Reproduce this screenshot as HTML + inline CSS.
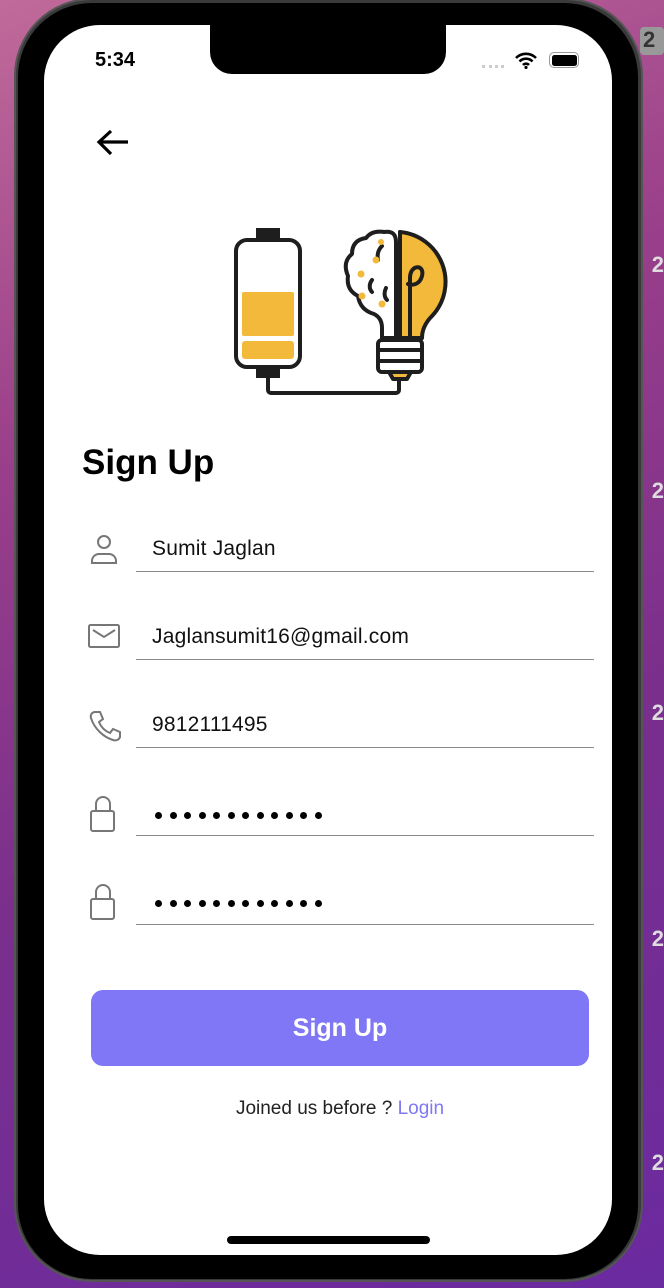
<!DOCTYPE html>
<html><head><meta charset="utf-8"><style>
*{margin:0;padding:0;box-sizing:border-box}
body{width:664px;height:1288px;overflow:hidden;position:relative;font-family:"Liberation Sans",sans-serif;
background:linear-gradient(160deg,#c06a9a 0%,#9a3f8a 30%,#7a2f8c 60%,#6a2aa0 100%)}
.phone{position:absolute;left:14px;top:-2px;width:629px;height:1284px;border-radius:78px;background:#3a3a3c;border:2px solid #555}
.screen{position:absolute;left:44px;top:25px;width:568px;height:1230px;border-radius:56px;background:#fff;overflow:hidden}
.notch{position:absolute;left:166px;top:0;width:236px;height:49px;background:#000;border-radius:0 0 22px 22px}
.t{position:absolute;color:#000}
.line{position:absolute;left:92px;width:458px;height:1px;background:#8a8a8a}
.fld{position:absolute;left:108px;font-size:21px;color:#111;letter-spacing:.2px}
.dots{position:absolute;left:111px;display:flex;gap:7.5px}
.dots i{display:block;width:7px;height:7px;border-radius:50%;background:#000}
.ic{position:absolute;left:44px}
.side{position:absolute;right:0;color:#ddd;font-weight:bold;font-size:22px}
</style></head><body>
<div class="side" style="top:27px;right:0;background:#999;color:#333;width:24px;height:28px;border-radius:4px;padding-left:3px">2</div>
<div class="side" style="top:252px;right:0">2</div>
<div class="side" style="top:478px;right:0">2</div>
<div class="side" style="top:700px;right:0">2</div>
<div class="side" style="top:926px;right:0">2</div>
<div class="side" style="top:1150px;right:0">2</div>
<div class="phone"></div>
<div style="position:absolute;left:18px;top:3px;width:620px;height:1276px;border-radius:74px;background:#000"></div>
<div class="screen">
<div class="notch"></div>
<div class="t" style="left:51px;top:24px;font-size:20px;font-weight:bold">5:34</div>
<div style="position:absolute;left:438px;top:40px;width:22px;height:3px;border-top:3px dotted #ccc"></div>
<svg style="position:absolute;left:471px;top:27px" width="22" height="17" viewBox="0 0 22 17"><path d="M1 6a14 14 0 0 1 20 0M4.5 9.5a9 9 0 0 1 13 0M8 13a4 4 0 0 1 6 0" stroke="#000" stroke-width="2.6" fill="none"/><circle cx="11" cy="15.5" r="1.6"/></svg>
<div style="position:absolute;left:505px;top:27px;width:30px;height:16px;border:1.5px solid #999;border-radius:5px;padding:1.5px"><div style="width:100%;height:100%;background:#000;border-radius:2.5px"></div></div>
<svg style="position:absolute;left:51px;top:103px" width="36" height="30" viewBox="0 0 36 30"><path d="M33 14H5M16 3L4 14l12 12" stroke="#000" stroke-width="3.2" fill="none"/></svg>
<svg style="position:absolute;left:142px;top:175px" width="280" height="210" viewBox="0 0 280 210">
<g stroke="#1e1e1e" stroke-width="4" fill="none" stroke-linecap="round" stroke-linejoin="round">
<rect x="70" y="28" width="24" height="12" fill="#1e1e1e" stroke="none"/>
<rect x="50" y="40" width="64" height="127" rx="11" fill="#fff"/>
<rect x="70" y="166" width="24" height="12" fill="#1e1e1e" stroke="none"/>
<path d="M82 178v12a3 3 0 0 0 3 3h125a3 3 0 0 0 3-3v-12"/>
<path d="M214 32A50 50 0 0 1 246 116Q236 126 236 138L214 138Z" fill="#f2b93b"/>
<path d="M210 138H196V128Q196 118 188 114Q174 110 172 96Q160 90 162 76Q156 62 166 54Q166 40 180 38Q186 30 198 32Q210 30 210 42Z" fill="#fff"/>
<path d="M214 32V140"/>
<path d="M203 172h22l-4 7h-14z" fill="#f2b93b"/>
<rect x="192" y="140" width="44" height="32" rx="4" fill="#fff"/>
<path d="M192 150h44M192 161h44"/>
<path d="M224 138V78c0-14 15-14 12-2-2 8-9 10-14 8"/>
<path d="M196 46c-4 4-5 9-4 14M186 80c-3 4-3 9 0 12M200 88c-2 4-2 9 1 12"/>
</g>
<rect x="56" y="92" width="52" height="44" fill="#f2b93b" rx="2"/>
<rect x="56" y="141" width="52" height="18" fill="#f2b93b" rx="3"/>
<g fill="#f2b93b"><circle cx="195" cy="42" r="3"/><circle cx="190" cy="60" r="3.5"/><circle cx="175" cy="74" r="3.5"/><circle cx="176" cy="96" r="3.5"/><circle cx="196" cy="104" r="3.5"/></g>
</svg>
<div class="t" style="left:38px;top:418px;font-size:35px;font-weight:bold">Sign Up</div>

<svg class="ic" style="top:508px" width="32" height="32" viewBox="0 0 32 32"><g stroke="#777" stroke-width="2" fill="none"><circle cx="16" cy="9" r="6"/><path d="M4 30v-2a7 7 0 0 1 7-7h10a7 7 0 0 1 7 7v2z"/></g></svg>
<div class="fld" style="top:512px">Sumit Jaglan</div><div class="line" style="top:546px"></div>

<svg class="ic" style="top:598px" width="32" height="26" viewBox="0 0 32 26"><g stroke="#777" stroke-width="2" fill="none"><rect x="1" y="2" width="30" height="22" rx="1.5"/><path d="M5 7l11 7 11-7"/></g></svg>
<div class="fld" style="top:600px">Jaglansumit16@gmail.com</div><div class="line" style="top:634px"></div>

<svg class="ic" style="top:685px" width="34" height="32" viewBox="0 0 34 32"><path d="M7 2l5 0 3 7-4 3c2 5 6 9 11 11l3-4 7 3 0 5c-1 3-4 4-7 3C15 27 6 18 3 8 2 5 4 2 7 2z" stroke="#777" stroke-width="2" fill="none"/></svg>
<div class="fld" style="top:688px">9812111495</div><div class="line" style="top:722px"></div>

<svg class="ic" style="top:770px" width="30" height="38" viewBox="0 0 30 38"><g stroke="#777" stroke-width="2" fill="none"><path d="M8 16V9a7 7 0 0 1 14 0v7"/><rect x="3" y="16" width="23" height="20" rx="2"/></g></svg>
<div class="dots" style="top:787px"><i></i><i></i><i></i><i></i><i></i><i></i><i></i><i></i><i></i><i></i><i></i><i></i></div><div class="line" style="top:810px"></div>

<svg class="ic" style="top:858px" width="30" height="38" viewBox="0 0 30 38"><g stroke="#777" stroke-width="2" fill="none"><path d="M8 16V9a7 7 0 0 1 14 0v7"/><rect x="3" y="16" width="23" height="20" rx="2"/></g></svg>
<div class="dots" style="top:875px"><i></i><i></i><i></i><i></i><i></i><i></i><i></i><i></i><i></i><i></i><i></i><i></i></div><div class="line" style="top:899px"></div>

<div style="position:absolute;left:47px;top:965px;width:498px;height:76px;border-radius:12px;background:#7f77f6;color:#fff;font-size:25px;font-weight:bold;text-align:center;line-height:76px">Sign Up</div>
<div style="position:absolute;left:0;width:592px;top:1073px;text-align:center;font-size:19px;color:#222">Joined us before ? <span style="color:#7f77f6">Login</span></div>
<div style="position:absolute;left:183px;top:1211px;width:203px;height:8px;border-radius:4px;background:#000"></div>
</div>
</body></html>
